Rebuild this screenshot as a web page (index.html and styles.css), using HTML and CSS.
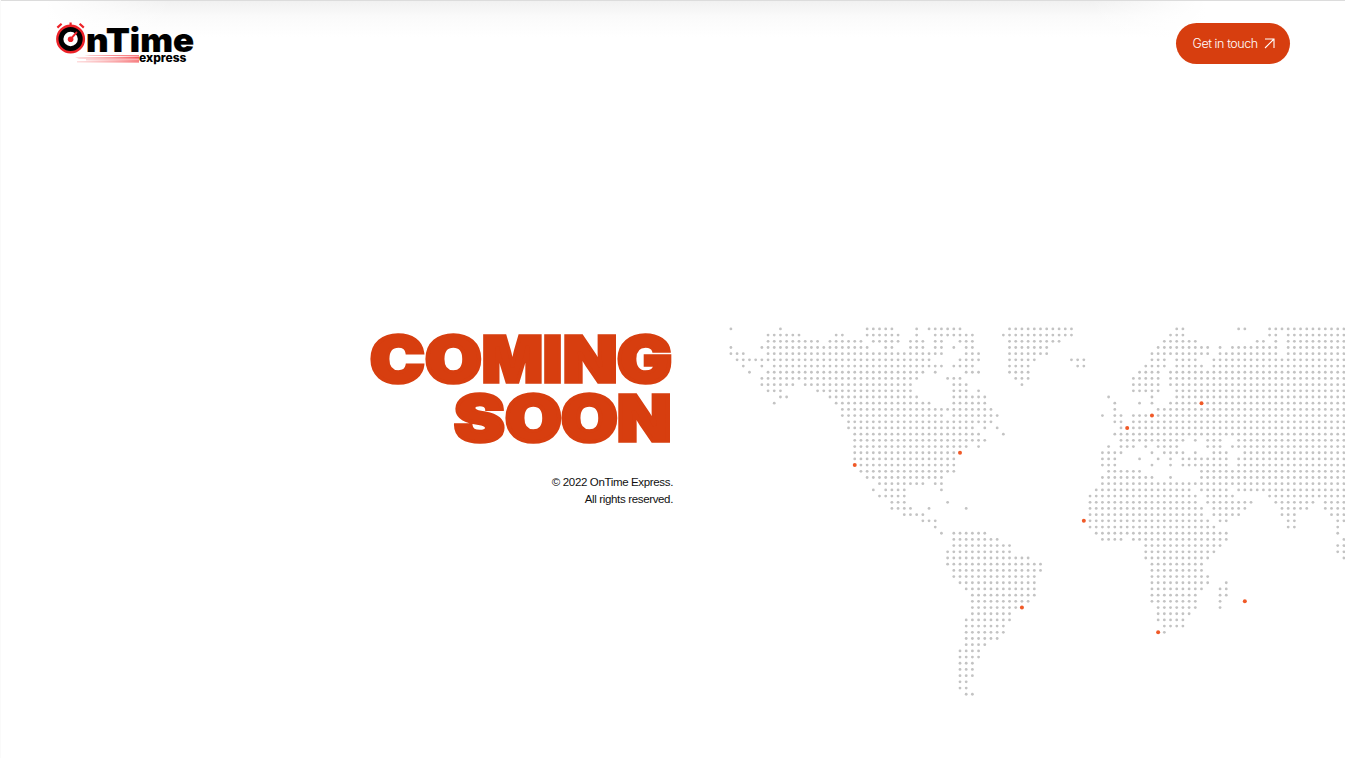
FILE: index.html
```html
<!DOCTYPE html>
<html lang="en">
<head>
<meta charset="utf-8">
<title>OnTime Express</title>
<link rel="stylesheet" href="styles.css">
</head>
<body>
<header class="header">
  <a class="logo" aria-label="OnTime Express">
    <svg width="140" height="46" viewBox="55 21 140 46">
      <defs><linearGradient id="speed" x1="0" x2="1"><stop offset="0" stop-color="#f12b30" stop-opacity=".3"/><stop offset="1" stop-color="#f12b30" stop-opacity=".8"/></linearGradient></defs>
      <path d="M57.4 27.6l4.2-3.8M79.6 23.8l4.2 3.8M70.6 22.6v3" fill="none" stroke="#ed2228" stroke-width="2.2"/>
      <circle cx="70.6" cy="39" r="13.3" fill="#000" stroke="#ed2228" stroke-width="2.4"/>
      <circle cx="70.6" cy="39" r="7.2" fill="#fff"/>
      <path d="M70.6 39.2l5.8-6.6" stroke="#ed2228" stroke-width="2" stroke-linecap="round"/>
      <circle cx="70.6" cy="39.2" r="2.8" fill="#ed2228"/>
      <text class="logo-name" x="86" y="51.8" textLength="108" lengthAdjust="spacingAndGlyphs">nTime</text>
      <path fill="url(#speed)" d="M90 55l49 .2v1.2l-55-.8zM75 57.5l64-.5v1.7l-60-.3zM86 59.5l53-.1v1.3l-53-.5zM77 61.6l62-.3v1.2l-62-.3z"/>
      <text class="logo-sub" x="139" y="62.4" textLength="47.5" lengthAdjust="spacingAndGlyphs">express</text>
    </svg>
  </a>
  <a class="button">
    <span>Get in touch</span>
    <svg width="11" height="11" viewBox="0 0 11 11"><path d="M1 1h9v9M10 1L1 10" fill="none" stroke="#fff" stroke-width="1.1"/></svg>
  </a>
</header>
<main class="main">
  <section class="intro">
    <h1 class="title">
      <span class="line"><span class="ch c">C</span><span class="ch o">O</span><span class="ch m">M</span><span class="ch i">I</span><span class="ch n">N</span><span class="ch g">G</span></span>
      <span class="line"><span class="ch s">S</span><span class="ch o">O</span><span class="ch o">O</span><span class="ch n">N</span></span>
    </h1>
    <p class="legal">© 2022 OnTime Express.<br>All rights reserved.</p>
  </section>
  <svg class="map" id="map" width="620" height="372" viewBox="725 326 620 372"></svg>
</main>
<script src="map.js"></script>
</body>
</html>
```
FILE: styles.css
```css
* { box-sizing: border-box; }
body {
  margin: 0;
  height: 758px;
  overflow: hidden;
  display: flex;
  flex-direction: column;
  background: #fff;
  border-left: 1px solid #fafafa;
  font-family: Inter, "Liberation Sans", sans-serif;
  color: #111;
}
.header {
  flex: none;
  height: 87px;
  padding: 20px 55px 0 54px;
  display: flex;
  justify-content: space-between;
  align-items: flex-start;
  border-top: 1px solid #dcdcdc;
  background:
    linear-gradient(to right, #fff 45px, rgba(255,255,255,0) 170px, rgba(255,255,255,0) 1090px, #fff 1205px),
    linear-gradient(#f1f1f1 0, #fafafa 15px, #fff 36px);
}
.logo svg { display: block; }
.logo-name { font: 900 33px Inter, sans-serif; fill: #000; stroke: #000; stroke-width: .2px; }
.logo-sub { font: 800 11.5px Inter, sans-serif; fill: #000; }
.button {
  margin-top: 2px;
  width: 114px;
  height: 41px;
  border-radius: 21px;
  background: #d73e0f;
  color: #fff;
  display: flex;
  align-items: center;
  padding-left: 16.5px;
  gap: 6px;
  font-size: 12.5px;
  font-weight: 350;
  letter-spacing: -.42px;
  white-space: nowrap;
}
.main {
  display: flex;
  align-items: flex-start;
  padding-top: 239px;
}
.intro {
  width: 672px;
  padding-top: 3px;
  display: flex;
  flex-direction: column;
  align-items: flex-end;
}
.title {
  margin: 0 1.5px 0 0;
  font: 900 63px/59px Inter, sans-serif;
  color: #d73e0f;
  -webkit-text-stroke: 3.6px #d73e0f;
}
.line { display: flex; justify-content: flex-end; height: 59px; }
.ch { display: block; transform-origin: 0 29.5px; }
.c { width: 55.2px; transform: translateY(.5px) scale(1.158, 1.01); }
.o { width: 56.1px; transform: translateY(.5px) scale(1.16, 1.01); }
.m { width: 61.4px; transform: translateY(.5px) scaleX(1.01); }
.i { width: 19.6px; transform: translateY(.5px) scaleX(1.04); }
.n { width: 54.4px; transform: translateY(.5px) scaleX(1.12); }
.g { width: 54.6px; transform: translateY(.5px) scale(1.155, 1.01); }
.s { width: 51.2px; transform: translateY(.5px) scale(1.205, 1.01); }
.legal {
  margin: 27px 0 0;
  font-family: "Liberation Sans", Arial, sans-serif;
  font-size: 11.5px;
  line-height: 17px;
  letter-spacing: -.35px;
  text-align: right;
}
.map { flex: none; margin-left: 52px; }
.dot { fill: #c3c3c3; }
.pin { fill: #f05a28; }
```
FILE: map.js
```js
// Each row lists the occupied columns, as single columns or ranges.
const rows = `0 8 22-26 30 32-37 45-55 72-73 82-83 87-99
6-11 17-18 22-27 30 33-39 44-55 71-73 87-88 90-99
6-14 16-21 23-27 29-31 33-34 37-39 45-53 70-75 85-86 88 90-99
0 5-22 25-26 29-31 33-34 36 38-39 45-51 69-77 79 81-88 90-99
0-2 6-34 38-40 45-51 68-77 79-88 90-99
1-32 37-40 45-49 55-57 68-70 72-75 78-99
2 5 7-34 36-39 45-48 56-57 67-70 72-76 78-99
3 6-31 33 38-40 45-48 66-69 71-99
5-30 35-37 46-48 65-69 71-99
5-10 12-29 36-38 47 65-69 71-99
6-8 14-29 36-38 40 65-69 72-99
8-9 16-30 36-41 61 68 72-99
7 17-32 36-41 62 66 68 71-99
18-42 62 69-99
18-34 36-43 60 62-63 65-99
19-42 62-63 65-99
19-39 41 43 63-99
20-40 44 62-99
20-41 63-73 75 77-79 82-99
20-38 40 61 63-65 67 69-72 77-79 81-99
20-37 60-63 68 70-73 75 78-80 83-99
20-36 60-62 66 69 71 73-80 82-99
20-36 60-62 68 71 73-80 82-99
21-36 61-66 76-99
22-34 60-68 71 76-99
24-31 33-34 60-99
23 25-28 34 59-74 76-80 82-99
24-28 58-75 77-81 87-99
26-28 35 58-75 77-84 88-94 96-99
26-29 32 38 58-76 78-83 89-93 96-99
28-31 58-76 78-82 89-91 97-99
31-33 57-77 79-80 90-91 98-99
33 58-78 90-91 98
34 36-41 59-80 98
36-43 60-63 65-80 99
36-45 67-79 98-99
35-45 67-78 98-99
35-48 67-77 99
35-50 68-76
36-50 68-76
36-49 68-77
37-49 68-77 80
38-49 68-76 79-80
39-49 68-75 79-80
39-48 68-75 79 83
39-47 69-75 79
39-45 69-74
38-45 69-73
38-44 70-73
38-44 69-70
38-43
38-41
37-40
37-40
37-39
37-39
37-39
37-38
37-38
38-39`.split("\n");
const pins = new Set(["76,12", "68,14", "64,16", "37,20", "20,22", "57,31", "83,44", "47,45", "69,49"]);
const step = 6.192;
let marks = "";
rows.forEach((row, r) => row.split(" ").forEach(run => {
  const [from, to = from] = run.split("-").map(Number);
  for (let c = from; c <= to; c++) {
    const pin = pins.has(c + "," + r);
    marks += `<circle class="${pin ? "pin" : "dot"}" cx="${(730.9 + c * step).toFixed(2)}" cy="${(328.9 + r * step).toFixed(2)}" r="${pin ? 2 : 1.4}"/>`;
  }
}));
document.getElementById("map").innerHTML = marks;
```
